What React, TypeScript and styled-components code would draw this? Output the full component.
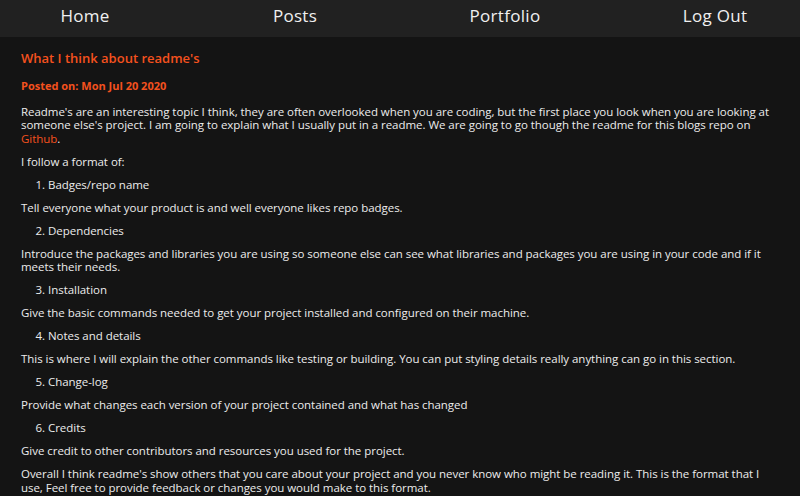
import React from "react";
import styled, { createGlobalStyle } from "styled-components";

const Global = createGlobalStyle`
  html, body { margin: 0; padding: 0; background: #141414; }
  body { font-family: "Open Sans", "DejaVu Sans", sans-serif; color: #ececec; overflow: hidden; }
`;

const Nav = styled.nav`
  height: 37px;
  background: #212121;
  display: flex;
  justify-content: center;
  align-items: center;
  overflow: hidden;
  padding-bottom: 6px;
  box-sizing: border-box;
`;

const NavLink = styled.a`
  flex: 0 0 210px;
  text-align: center;
  color: #f0f0f0;
  font-size: 17px;
  text-decoration: none;
  letter-spacing: 0.3px;
`;

const Main = styled.main`
  padding: 12px 21px 0 21px;
`;

const Title = styled.h1`
  margin: 0;
  color: #f4511e;
  font-size: 13px;
  font-weight: 600;
  line-height: 18px;
`;

const Posted = styled.h2`
  margin: 10px 0 0;
  color: #f4511e;
  font-size: 11px;
  font-weight: 700;
  line-height: 18px;
`;

const Body = styled.div`
  margin-top: 10px;
  font-size: 11.5px;
  line-height: 13.4px;
  letter-spacing: -0.04px;
`;

const P = styled.p`
  margin: 0 0 9.6px;
`;

const Link = styled.a`
  color: #f4511e;
  text-decoration: none;
`;

const List = styled.ol`
  margin: 0 0 9.6px;
  padding-left: 27px;
`;

const items: [string, string][] = [
  ["Badges/repo name", "Tell everyone what your product is and well everyone likes repo badges."],
  ["Dependencies", "Introduce the packages and libraries you are using so someone else can see what libraries and packages you are using in your code and if it meets their needs."],
  ["Installation", "Give the basic commands needed to get your project installed and configured on their machine."],
  ["Notes and details", "This is where I will explain the other commands like testing or building. You can put styling details really anything can go in this section."],
  ["Change-log", "Provide what changes each version of your project contained and what has changed"],
  ["Credits", "Give credit to other contributors and resources you used for the project."],
];

export default function App() {
  return (
    <>
      <Global />
      <Nav>
        <NavLink href="#">Home</NavLink>
        <NavLink href="#">Posts</NavLink>
        <NavLink href="#">Portfolio</NavLink>
        <NavLink href="#">Log Out</NavLink>
      </Nav>
      <Main>
        <Title>What I think about readme's</Title>
        <Posted>Posted on: Mon Jul 20 2020</Posted>
        <Body>
          <P>
            Readme's are an interesting topic I think, they are often overlooked when you are coding, but the first place you look when you are looking at someone else's project. I am going to explain what I usually put in a readme. We are going to go though the readme for this blogs repo on <Link href="#">Github</Link>.
          </P>
          <P>I follow a format of:</P>
          {items.map(([h, t], i) => (
            <React.Fragment key={h}>
              <List start={i + 1}>
                <li>{h}</li>
              </List>
              <P>{t}</P>
            </React.Fragment>
          ))}
          <P>
            Overall I think readme's show others that you care about your project and you never know who might be reading it. This is the format that I use, Feel free to provide feedback or changes you would make to this format.
          </P>
        </Body>
      </Main>
    </>
  );
}
